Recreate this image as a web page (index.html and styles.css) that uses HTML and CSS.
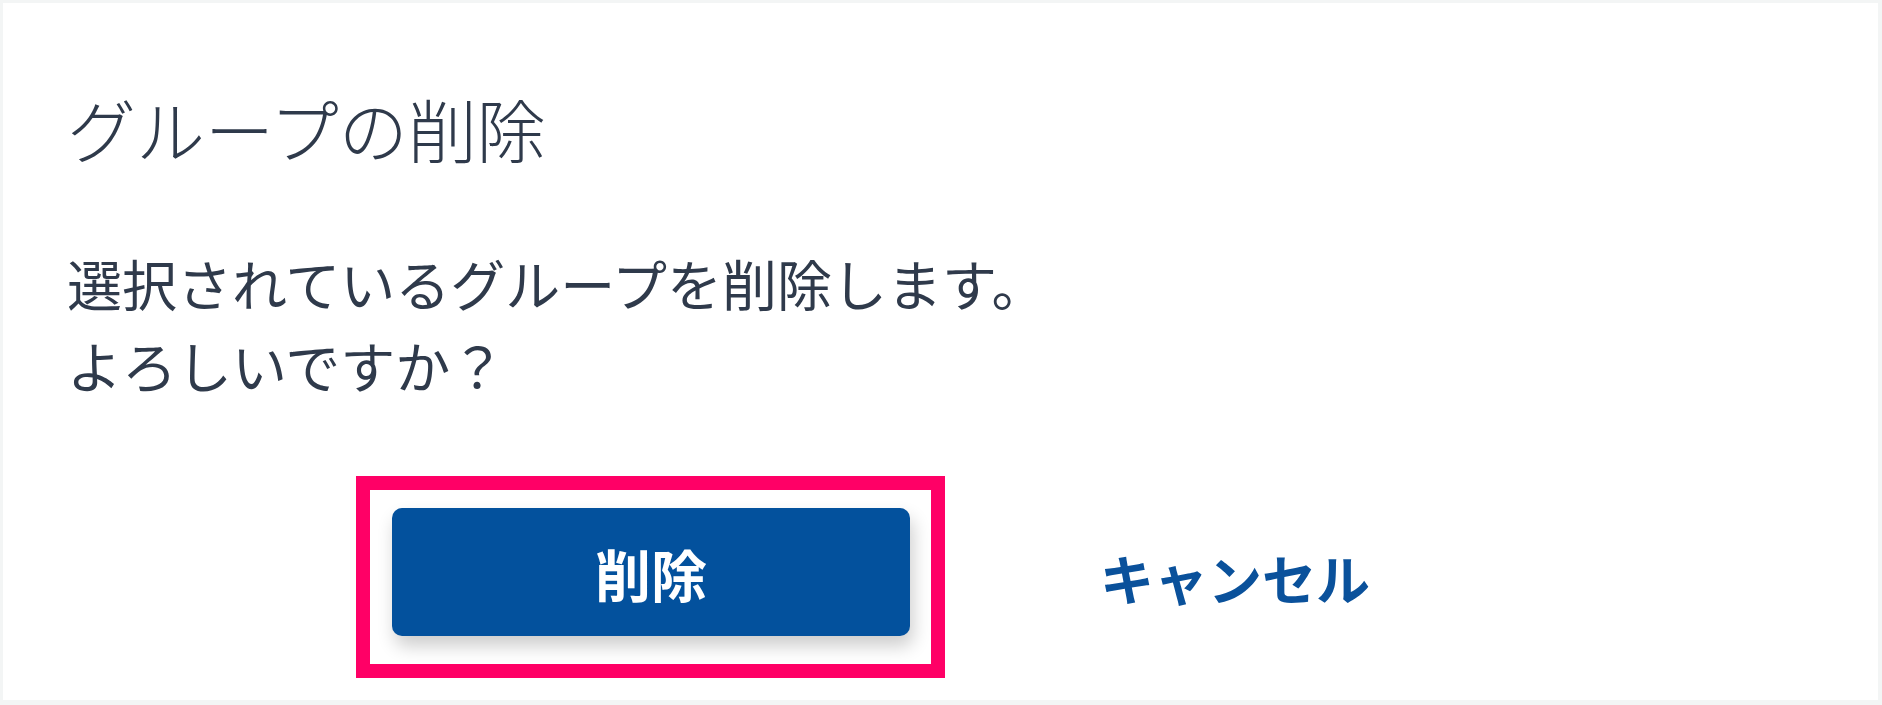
FILE: index.html
```html
<!DOCTYPE html>
<html lang="ja">
<head>
    <meta charset="UTF-8">
    <meta name="viewport" content="width=device-width, initial-scale=1.0">
    <title>グループの削除</title>
    <link rel="stylesheet" href="styles.css">
</head>
<body>
    <div class="dialog">
        <h1 class="dialog-title">グループの削除</h1>

        <p class="dialog-message">選択されているグループを削除します。<br>よろしいですか？</p>

        <div class="dialog-actions">
            <div class="highlight">
                <button class="btn-delete">削除</button>
            </div>
            <button class="btn-cancel">キャンセル</button>
        </div>
    </div>
</body>
</html>
```

FILE: styles.css
```css
* {
    margin: 0;
    padding: 0;
    box-sizing: border-box;
}

body {
    font-family: "Noto Sans CJK JP", "Noto Sans", sans-serif;
    background-color: #f3f5f5;
    color: #2f3a4b;
    width: 1882px;
    height: 705px;
    overflow: hidden;
}

.dialog {
    margin: 3px 4px 0 3px;
    height: 697px;
    background-color: #fff;
    padding: 0 0 0 64px;
}

.dialog-title {
    font-size: 69px;
    font-weight: 300;
    line-height: 69px;
    padding-top: 91px;
}

.dialog-message {
    font-size: 55px;
    font-weight: 400;
    line-height: 82px;
    margin-top: 78px;
}

.dialog-actions {
    display: flex;
    align-items: center;
    margin-top: 71px;
    margin-left: 289px;
}

.highlight {
    border: 14px solid #ff0066;
    padding: 18px 21px 28px 22px;
}

.btn-delete {
    display: block;
    width: 518px;
    height: 128px;
    border: none;
    border-radius: 10px;
    background-color: #03519d;
    color: #fff;
    font-family: inherit;
    font-size: 56px;
    font-weight: 700;
    box-shadow: 3px 10px 18px rgba(0, 0, 0, 0.2);
    cursor: pointer;
}

.btn-cancel {
    margin-left: 155px;
    border: none;
    background: transparent;
    color: #0a519b;
    font-family: inherit;
    font-size: 54px;
    font-weight: 700;
    cursor: pointer;
}
```
